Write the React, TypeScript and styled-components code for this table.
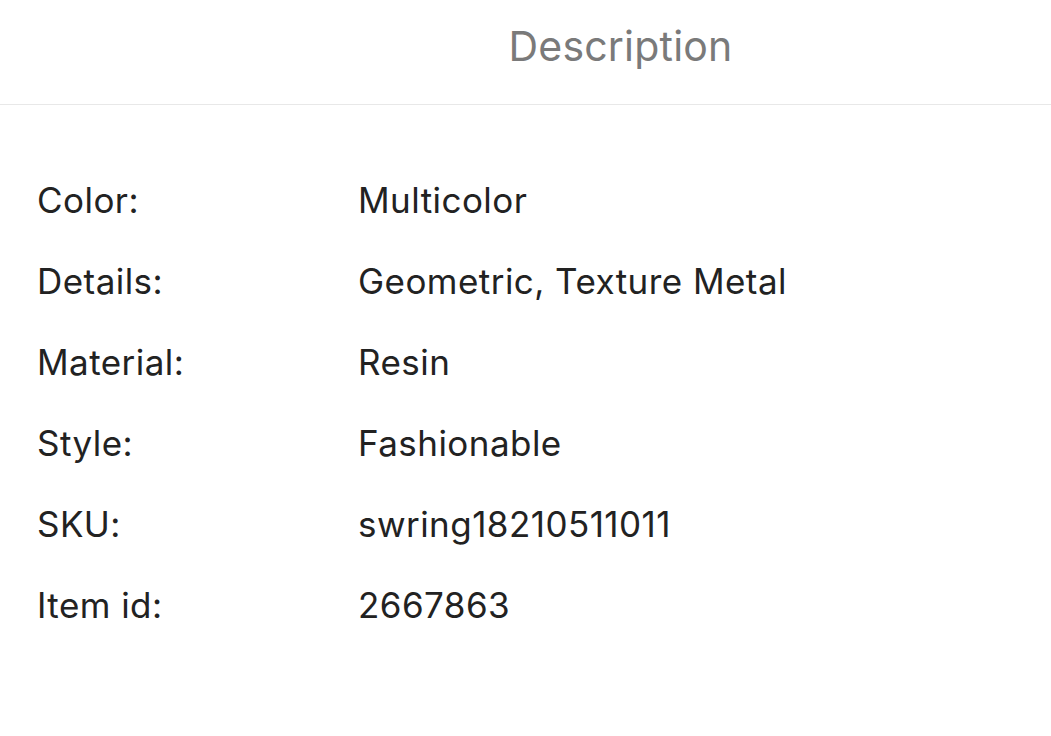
import { Fragment } from 'react'
import styled, { createGlobalStyle } from 'styled-components'

const GlobalStyle = createGlobalStyle`
  html, body {
    margin: 0;
    padding: 0;
    background: #ffffff;
  }
  body {
    font-family: Inter, 'Noto Sans', 'Liberation Sans', sans-serif;
    -webkit-font-smoothing: antialiased;
  }
`

const Page = styled.div`
  width: 1051px;
  height: 736px;
  background: #ffffff;
  overflow: hidden;
`

const Header = styled.div`
  height: 105px;
  display: flex;
  align-items: center;
  justify-content: center;
  padding-left: 190px;
  box-sizing: border-box;
  border-bottom: 1px solid #e8e8e8;
`

const Title = styled.div`
  font-size: 41px;
  font-weight: 400;
  color: #7a7a7a;
  letter-spacing: 0.2px;
  margin-top: -12px;
`

const Specs = styled.div`
  display: grid;
  grid-template-columns: 321px 1fr;
  padding: 55px 0 0 37px;
`

const Label = styled.div`
  font-size: 35px;
  line-height: 81px;
  letter-spacing: 0.45px;
  color: #222222;
`

const Value = styled(Label)``

const specs: [string, string][] = [
  ['Color:', 'Multicolor'],
  ['Details:', 'Geometric, Texture Metal'],
  ['Material:', 'Resin'],
  ['Style:', 'Fashionable'],
  ['SKU:', 'swring18210511011'],
  ['Item id:', '2667863'],
]

export default function App() {
  return (
    <Page>
      <GlobalStyle />
      <Header>
        <Title>Description</Title>
      </Header>
      <Specs>
        {specs.map(([label, value]) => (
          <Fragment key={label}>
            <Label>{label}</Label>
            <Value>{value}</Value>
          </Fragment>
        ))}
      </Specs>
    </Page>
  )
}
